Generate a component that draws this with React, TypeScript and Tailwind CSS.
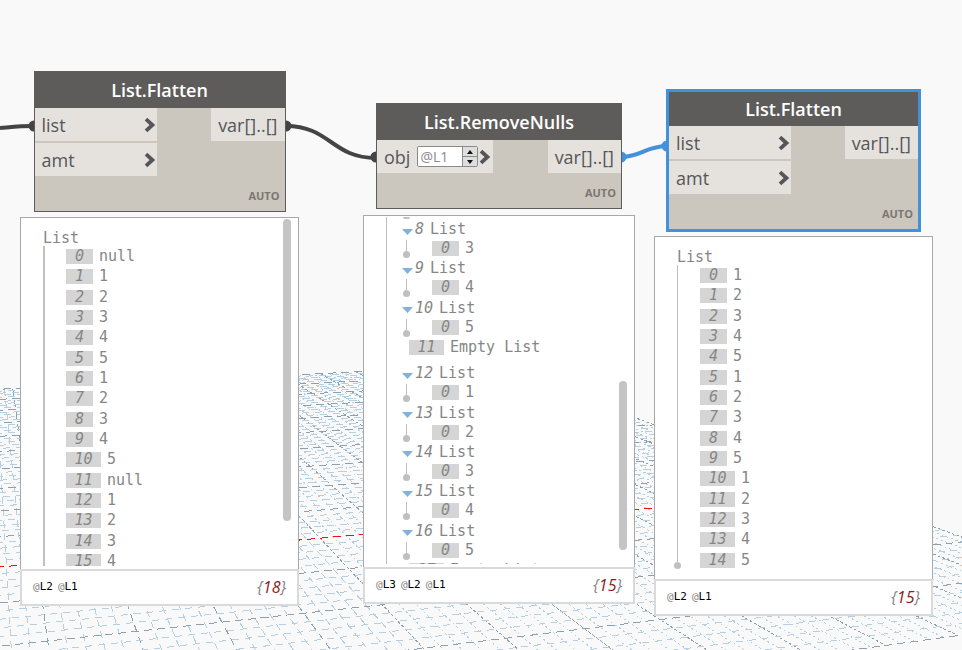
import React from "react";

const INK = "#444444";
const BLUE = "#4391d9";

/* ---------- perspective ground grid ---------- */

const HORIZON = 180;
const VP_DOWN = -16;
const VP_ACROSS = 4300;

// depth lines run towards the right-hand vanishing point
function depthLine(v: number) {
  const y = HORIZON + 1 / (0.002778 + 0.000236 * v);
  return { m: (HORIZON - y) / (VP_ACROSS - 300), y0: y };
}

function meet(u: number, v: number) {
  const { m, y0 } = depthLine(v);
  const s = 43 + 85.4 * u;
  const k = (s - VP_DOWN) / (607 - HORIZON);
  // x = VP_DOWN + k (y - HORIZON), y = y0 + m (x - 300)
  const y = (y0 + m * (VP_DOWN - k * HORIZON - 300)) / (1 - m * k);
  return { x: VP_DOWN + k * (y - HORIZON), y };
}

function Grid() {
  const lines: React.ReactNode[] = [];
  for (let j = -3; j <= 65; j++) {
    const a = meet(j / 5, 10);
    const b = meet(j / 5, -4);
    const major = j % 5 === 0;
    lines.push(
      <line
        key={"b" + j}
        x1={a.x}
        y1={a.y}
        x2={b.x}
        y2={b.y}
        stroke={major ? "#8ca0b0" : "#b5d0e2"}
        strokeDasharray={j < 20 ? "7 5" : major ? "3 2" : "2 3"}
        strokeDashoffset={j < 20 ? 0 : (Math.abs(j) * 7) % 5}
      />,
    );
  }
  for (let i = -20; i <= 50; i++) {
    const a = meet(-2, i / 5);
    const b = meet(13, i / 5);
    const major = i % 5 === 0;
    const axis = i === 0;
    lines.push(
      <line
        key={"a" + i}
        x1={a.x}
        y1={a.y}
        x2={b.x}
        y2={b.y}
        stroke={axis ? "#ee1111" : major ? "#8ca0b0" : "#b5d0e2"}
        strokeDasharray={major ? "8 5" : "7 6"}
        strokeDashoffset={(Math.abs(i) * 31) % 13}
      />,
    );
  }
  return (
    <svg className="absolute left-0 top-0 h-[650px] w-[962px]" viewBox="0 0 962 650" shapeRendering="crispEdges" fill="none" strokeWidth="1" aria-hidden="true">
      {lines}
    </svg>
  );
}

function Wires() {
  return (
    <svg className="absolute left-0 top-0 h-[650px] w-[962px]" viewBox="0 0 962 650" fill="none" strokeWidth="4" aria-hidden="true">
      <path d="M0 128 C12 127 20 126 34 126" stroke={INK} />
      <path d="M286 126 C330 126 332 158 376 158" stroke={INK} />
      <path d="M621 157 C642 157 645 146 668 146" stroke={BLUE} />
      <g fill={INK}>
        <circle cx="34" cy="126" r="5.5" />
        <circle cx="286" cy="126" r="5.5" />
        <circle cx="376" cy="157" r="5.5" />
      </g>
      <g fill={BLUE}>
        <circle cx="621" cy="157" r="5.5" />
        <circle cx="667" cy="146" r="5.5" />
      </g>
    </svg>
  );
}

/* ---------- nodes ---------- */

function Chevron() {
  return (
    <svg className="h-4 w-3 shrink-0" viewBox="0 0 12 16" fill="none" stroke="#55565a" strokeWidth="3.8" aria-hidden="true">
      <path d="M2 2.2 L8.4 8 L2 13.8" />
    </svg>
  );
}

function LevelSpinner() {
  return (
    <div className="ml-[7px] mr-px flex h-[21px] w-[61px] overflow-hidden rounded-[2px] border border-[#8a8a8a] bg-white">
      <input aria-label="List level" defaultValue="@L1" className="w-11 min-w-0 bg-white pl-[2px] text-[14px] leading-[19px] text-[#8a8a8a] outline-none" />
      <div className="flex w-[15px] flex-col divide-y divide-[#8a8a8a] border-l border-[#8a8a8a]">
        <button aria-label="Increase level" className="flex flex-1 items-center justify-center bg-[#dedede]">
          <svg viewBox="0 0 8 4" className="h-1 w-2"><path d="M4 0L7 4H1Z" fill="#111" /></svg>
        </button>
        <button aria-label="Decrease level" className="flex flex-1 items-center justify-center bg-[#dedede]">
          <svg viewBox="0 0 8 4" className="h-1 w-2"><path d="M4 4L7 0H1Z" fill="#111" /></svg>
        </button>
      </div>
    </div>
  );
}

type NodeProps = { title: string; inputs: string[]; size: string; portSize: string; selected?: boolean; level?: boolean };

function GraphNode({ title, inputs, size, portSize, selected, level }: NodeProps) {
  return (
    <section className={`${size} bg-[#cbc6be] text-[#55565a] ${selected ? "border-3 border-[#4391d9]" : "border border-[#5e5c5a]"}`}>
      <h2 className={`flex items-center justify-center bg-[#5e5c5a] text-[18px] leading-6 font-semibold text-white ${selected ? "h-[34px]" : "h-9"}`}>{title}</h2>
      <div className="flex items-start justify-between text-[18px] leading-6">
        <div className={`flex flex-col gap-[2px] ${portSize}`}>
          {inputs.map((name) => (
            <div key={name} className="flex h-[33px] items-center justify-between bg-[#e5e2dd] pl-[7px]">
              <span>{name}</span>
              {level && <LevelSpinner />}
              <span className={level ? "flex flex-1" : "flex pr-[1px]"}><Chevron /></span>
            </div>
          ))}
        </div>
        <div className="flex h-[33px] items-center bg-[#e5e2dd] px-[7px]">var[]..[]</div>
      </div>
      <div className="flex h-[35px] items-center justify-end pt-1 pr-[5px] text-[11px] leading-4 font-bold text-[#7a7771]">AUTO</div>
    </section>
  );
}

/* ---------- preview bubbles ---------- */

function Tag({ index }: { index: number }) {
  return (
    <span className={`h-[15px] shrink-0 bg-[#d5d5d5] text-center italic ${index > 9 ? "w-[35px]" : "w-[27px]"}`}>{index}</span>
  );
}

function Item({ index, value }: { index: number; value: string }) {
  return (
    <li className="flex h-[15px] gap-[6px] whitespace-pre">
      <Tag index={index} />
      <span>{value}</span>
    </li>
  );
}

function Preview({ size, bodySize, levels, count, scroll, children }: { size: string; bodySize: string; levels: string[]; count: number; scroll?: string; children: React.ReactNode }) {
  return (
    <section className={size}>
      <div className={`relative border border-b-0 border-[#a8a8a8] bg-white pt-px pb-[3px] font-['DejaVu_Sans_Mono','Liberation_Mono',monospace] text-[15px] leading-[15px] text-[#868686] ${bodySize}`}>
        <div className="h-full overflow-hidden">{children}</div>
        {scroll && <div className={`absolute right-[7px] w-2 rounded-full bg-[#c4c4c4] ${scroll}`} />}
      </div>
      <footer className="flex h-[37px] items-center justify-between border-2 border-[#dadada] bg-white pr-[11px] pb-px pl-[11px]">
        <div className="flex gap-[5px] font-['DejaVu_Sans_Mono','Liberation_Mono',monospace] text-[11px] leading-4 text-black">
          {levels.map((l) => (
            <span key={l}><span className="text-[#868686]">@</span>{l}</span>
          ))}
        </div>
        <div className="text-[16px] leading-5 text-[#868686] italic">
          {"{"}<span className="text-[#8b1a1a]">{count}</span>{"}"}
        </div>
      </footer>
    </section>
  );
}

function FlatList({ values, listSize, lineSize, end }: { values: string[]; listSize: string; lineSize: string; end?: boolean }) {
  return (
    <div className="pt-3 pl-[21px]">
      <div className="h-[15px] pl-px">List</div>
      <div className="flex">
        <div className={`flex shrink-0 flex-col items-center ${lineSize}`}>
          <div className={`flex-1 bg-[#c0c0c0] ${end ? "w-px" : "w-[2px]"}`} />
          {end && <div className="size-[7px] shrink-0 rounded-full bg-[#c0c0c0]" />}
        </div>
        <ul className={`mt-[3px] flex shrink-0 flex-col justify-between pl-[21px] ${listSize}`}>
          {values.map((v, i) => <Item key={i} index={i} value={v} />)}
        </ul>
      </div>
    </div>
  );
}

function Branch({ index, value }: { index: number; value: string }) {
  return (
    <li className="h-[39px]">
      <div className="flex h-[21px] items-center">
        <svg className="mt-1 mr-[2px] h-[6px] w-[11px]" viewBox="0 0 11 6" aria-hidden="true"><path d="M0 0H11L5.5 6Z" fill="#84b1dc" /></svg>
        <span className="mr-[6px] italic">{index}</span>
        <span>List</span>
      </div>
      <div className="flex">
        <div className="flex h-[18px] w-[9px] shrink-0 flex-col items-center">
          <div className="w-px flex-1 bg-[#c0c0c0]" />
          <div className="size-[7px] shrink-0 rounded-full bg-[#c0c0c0]" />
        </div>
        <ul className="pt-px pl-[21px]"><Item index={0} value={value} /></ul>
      </div>
    </li>
  );
}

function NestedList() {
  return (
    <div className="ml-[22px] h-full overflow-hidden border-l border-[#c0c0c0] pl-[15px]">
      <div className="ml-px h-[2px] w-[7px] rounded-b-full bg-[#c0c0c0]" />
      <ul className="flex h-[367px] flex-col justify-between">
        <Branch index={8} value="3" />
        <Branch index={9} value="4" />
        <Branch index={10} value="5" />
        <li className="h-[26px] pt-[3px] pl-[7px]"><ul><Item index={11} value="Empty List" /></ul></li>
        <Branch index={12} value="1" />
        <Branch index={13} value="2" />
        <Branch index={14} value="3" />
        <Branch index={15} value="4" />
        <Branch index={16} value="5" />
        <li className="h-[26px] pt-[3px] pl-[7px]"><ul><Item index={17} value="Empty List" /></ul></li>
      </ul>
    </div>
  );
}

const BEFORE = ["null", "1", "2", "3", "4", "5", "1", "2", "3", "4", "5", "null", "1", "2", "3", "4"];
const AFTER = ["1", "2", "3", "4", "5", "1", "2", "3", "4", "5", "1", "2", "3", "4", "5"];

export default function App() {
  return (
    <main className="relative h-screen min-h-[650px] overflow-hidden bg-[#f9f9f9] font-['Open_Sans','Noto_Sans',sans-serif]">
      <Grid />
      <Wires />
      <div className="absolute top-[71px] left-[20px] flex flex-col items-center gap-[5px]">
        <GraphNode title="List.Flatten" inputs={["list", "amt"]} size="w-[252px]" portSize="w-[122px]" />
        <Preview size="w-[279px]" bodySize="h-[352px]" levels={["L2", "L1"]} count={18} scroll="top-[1px] h-[302px]">
          <FlatList values={BEFORE} listSize="h-[320px]" lineSize="w-[3px]" />
        </Preview>
      </div>
      <div className="absolute top-[103px] left-[363px] flex flex-col items-center gap-[6px]">
        <GraphNode title="List.RemoveNulls" inputs={["obj"]} size="w-[246px]" portSize="w-[116px]" level />
        <Preview size="w-[272px]" bodySize="h-[352px]" levels={["L3", "L2", "L1"]} count={15} scroll="top-[165px] h-[169px]">
          <NestedList />
        </Preview>
      </div>
      <div className="absolute top-[89px] left-[654px] flex flex-col items-center gap-[4px]">
        <GraphNode title="List.Flatten" inputs={["list", "amt"]} size="w-[255px]" portSize="w-[122px]" selected />
        <Preview size="w-[279px]" bodySize="h-[343px]" levels={["L2", "L1"]} count={15}>
          <FlatList values={AFTER} listSize="h-[300px]" lineSize="h-[304px] w-[3px]" end />
        </Preview>
      </div>
    </main>
  );
}
